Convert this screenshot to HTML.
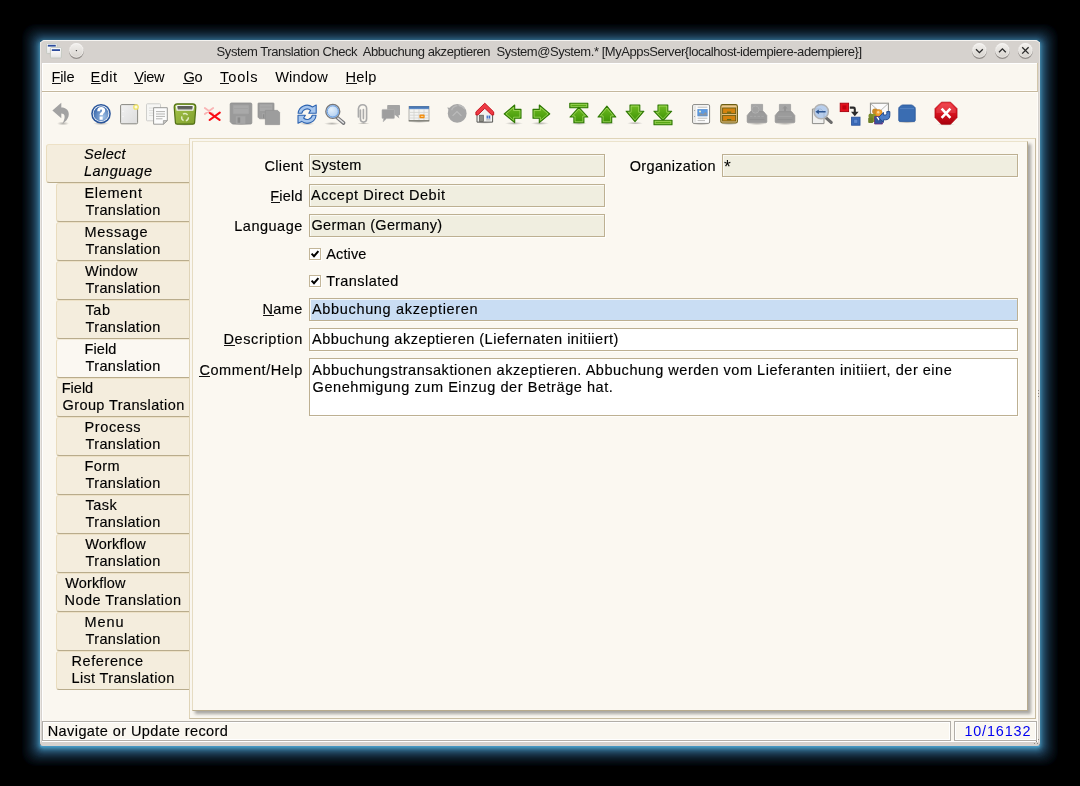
<!DOCTYPE html>
<html><head><meta charset="utf-8">
<style>
html,body{margin:0;padding:0;background:#000;}
body{width:1080px;height:786px;position:relative;overflow:hidden;font-family:"Liberation Sans",sans-serif;font-size:14px;color:#1b1b1b;}
div,svg{position:absolute;box-sizing:border-box;}
#glow{left:40px;top:42px;width:1000px;height:706px;border-radius:4px;box-shadow:0 0 0 1px rgb(58,122,155),0 0 0 2px rgb(50,106,138),0 0 0 3px rgb(42,91,121),0 0 0 4px rgb(36,79,106),0 0 0 5px rgb(32,69,94),0 0 0 6px rgb(28,60,83),0 0 0 7px rgb(24,52,73),0 0 0 8px rgb(21,45,64),0 0 0 9px rgb(18,39,55),0 0 0 10px rgb(15,33,47),0 0 0 11px rgb(12,28,40),0 0 0 12px rgb(10,24,34),0 0 0 13px rgb(8,20,28),0 0 0 14px rgb(8,15,23),0 0 0 15px rgb(7,11,19),0 0 0 16px rgb(3,10,14),0 0 0 17px rgb(0,8,11),0 0 0 18px rgb(0,2,8);}
#glowb{left:40px;top:745px;width:1000px;height:3px;border-radius:0 0 3px 3px;background:linear-gradient(#4496c2 0,#4496c2 66%,#408aaf 67%);}
#win{left:40px;top:40px;width:1000px;height:706px;background:#d6d2ce;border-radius:5px 5px 3px 3px;overflow:hidden;}
#hl{left:40px;top:40px;width:1000px;height:6px;border-radius:5px 5px 0 0;border-top:1px solid #f5f3f0;border-left:1px solid #ebe7e3;border-right:1px solid #e6e2de;}
#hll{left:40px;top:42px;width:1px;height:700px;background:#ebe7e3;}
#hlr{left:1039px;top:42px;width:1px;height:700px;background:#e4e0dc;}
#inner{left:42px;top:63px;width:996px;height:678px;background:#faf7f0;box-shadow:inset 1px 1px 0 #fff,inset -1px 0 0 #fffdf9;}
#wline{left:42px;top:741px;width:996px;height:1px;background:#fff;}
#menubar{left:42px;top:63px;width:996px;height:29px;border-bottom:1px solid #c5b89d;border-right:1px solid #d2c6aa;box-shadow:0 1px 0 #fffdf9,inset 0 -1px 0 #fffdf9;}
.t{white-space:pre;line-height:20px;height:20px;-webkit-text-stroke:0.15px currentColor;}
.u{height:1px;background:#111;}
.ic{overflow:visible;}
.tab{height:39px;background:#f4eddd;border-top:1px solid #ede1c6;border-left:1px solid #e9dcbe;border-bottom:1px solid #b9ac8c;border-radius:3px 0 0 3px;}
.tab.sel{background:#fbf8f2;border-top-color:#f2ead8;}
#oframe{left:189px;top:138px;width:847px;height:581px;border:1px solid #dfd4b8;border-right-color:#c6ba9e;border-bottom-color:#c6ba9e;}
#panel{left:192px;top:141px;width:836px;height:570px;background:#fbf8f1;border-top:1px solid #ebe3cc;border-left:1px solid #e6dcc2;border-right:1px solid #b7aa8c;border-bottom:1px solid #b7aa8c;box-shadow:3px 3px 3px rgba(45,45,45,.4);}
.ro{height:23px;background:#f0eee0;border:1px solid #bdb092;box-shadow:inset 1px 1px 0 #fbfaf4,1px 1px 0 #fffefb;}
.ed{background:#fff;border:1px solid #bdb092;box-shadow:1px 1px 0 #fffefb;}
.hi{background:#c9ddf3;box-shadow:inset 1px 1px 0 #f6f8f8,1px 1px 0 #fffefb;}
.cb{width:12px;height:12px;background:#fff;border:1px solid #c3b699;box-shadow:1px 1px 0 #fffefb;}
.sb{height:20px;top:721px;border:1px solid #b2aea8;background:#faf7f0;box-shadow:inset 0 0 0 1px #fff;}
</style></head><body>
<div id="glow"></div><div id="glowb"></div>
<div id="win"></div>
<div id="hl"></div><div id="hll"></div><div id="hlr"></div>
<div id="inner"></div><div id="wline"></div>
<div id="menubar"></div>
<div style="left:1038px;top:390px;width:1px;height:1px;background:#8e8880"></div><div style="left:1038px;top:393px;width:1px;height:1px;background:#8e8880"></div><div style="left:1038px;top:396px;width:1px;height:1px;background:#8e8880"></div>
<div style="left:1034px;top:743px;width:1px;height:1px;background:#8e8880"></div><div style="left:1036px;top:741px;width:1px;height:1px;background:#8e8880"></div><div style="left:1038px;top:739px;width:1px;height:1px;background:#8e8880"></div><div style="left:1037px;top:743px;width:1px;height:1px;background:#8e8880"></div>
<svg width="0" height="0" style="left:0;top:0"><defs>
<linearGradient id="gG" x1="0" y1="0" x2="0" y2="1"><stop offset="0" stop-color="#70bc22"/><stop offset="1" stop-color="#3c9205"/></linearGradient>
<linearGradient id="gGh" x1="0" y1="0" x2="1" y2="0"><stop offset="0" stop-color="#7cc528"/><stop offset="1" stop-color="#4e9a06"/></linearGradient>
<radialGradient id="gHelp" cx="0.65" cy="0.7" r="0.8"><stop offset="0" stop-color="#9fc0e6"/><stop offset="1" stop-color="#2f5fa6"/></radialGradient>
<linearGradient id="gDoc" x1="0" y1="0" x2="1" y2="1"><stop offset="0" stop-color="#f2f2f2"/><stop offset="1" stop-color="#dcdcdc"/></linearGradient>
<linearGradient id="gTrash" x1="0" y1="0" x2="1" y2="1"><stop offset="0" stop-color="#a6c54a"/><stop offset="1" stop-color="#7f9f2c"/></linearGradient>
<radialGradient id="gLens" cx="0.4" cy="0.35" r="0.7"><stop offset="0" stop-color="#e4f0fc"/><stop offset="1" stop-color="#a9c9ee"/></radialGradient>
<linearGradient id="gRed" x1="0" y1="0" x2="0" y2="1"><stop offset="0" stop-color="#f0303a"/><stop offset="0.5" stop-color="#d81420"/><stop offset="1" stop-color="#a8000c"/></linearGradient>
<linearGradient id="gBtn" x1="0" y1="0" x2="0" y2="1"><stop offset="0" stop-color="#f3f1ee"/><stop offset="0.55" stop-color="#e4e1dd"/><stop offset="1" stop-color="#d6d2cd"/></linearGradient>
<linearGradient id="gCal" x1="0" y1="0" x2="0" y2="1"><stop offset="0" stop-color="#3465a4"/><stop offset="1" stop-color="#6a96d0"/></linearGradient>
<radialGradient id="gSh" cx="0.5" cy="0.5" r="0.5"><stop offset="0" stop-color="#000" stop-opacity="0.28"/><stop offset="1" stop-color="#000" stop-opacity="0"/></radialGradient>
<linearGradient id="gWin" x1="0" y1="0" x2="0" y2="1"><stop offset="0" stop-color="#ffffff"/><stop offset="0.45" stop-color="#f6f6f6"/><stop offset="1" stop-color="#e4e4e4"/></linearGradient>
</defs></svg><svg style="left:45px;top:42px" width="20" height="18" viewBox="0 0 20 18"><rect x="1.6" y="1.6" width="10.4" height="10" rx="0.8" fill="url(#gWin)" stroke="#c2c6be" stroke-width="0.9"/><rect x="2.8" y="2.8" width="8" height="1.8" fill="#2c4c9c"/><rect x="5.4" y="5.6" width="11" height="10.4" rx="0.8" fill="url(#gWin)" stroke="#c2c6be" stroke-width="0.9"/><rect x="6.8" y="7.2" width="8.2" height="1.8" fill="#2c4c9c"/></svg><svg style="left:67px;top:41px" width="19" height="20" viewBox="0 0 19 20"><circle cx="9.4" cy="10.5" r="7.4" fill="#625e5a" fill-opacity="0.6"/><circle cx="9.4" cy="9.4" r="7.3" fill="url(#gBtn)"/><circle cx="9.4" cy="9.4" r="6.8" fill="none" stroke="#fff" stroke-opacity="0.45" stroke-width="0.8"/><circle cx="9.4" cy="9.6" r="0.7" fill="#333"/></svg><svg style="left:970px;top:41px" width="19" height="20" viewBox="0 0 19 20"><circle cx="9.4" cy="10.5" r="7.4" fill="#625e5a" fill-opacity="0.6"/><circle cx="9.4" cy="9.4" r="7.3" fill="url(#gBtn)"/><circle cx="9.4" cy="9.4" r="6.8" fill="none" stroke="#fff" stroke-opacity="0.45" stroke-width="0.8"/><path d="M6 8.2 L9.4 11.6 L12.8 8.2" fill="none" stroke="#2a2a2a" stroke-width="1.3"/></svg><svg style="left:993px;top:41px" width="19" height="20" viewBox="0 0 19 20"><circle cx="9.4" cy="10.5" r="7.4" fill="#625e5a" fill-opacity="0.6"/><circle cx="9.4" cy="9.4" r="7.3" fill="url(#gBtn)"/><circle cx="9.4" cy="9.4" r="6.8" fill="none" stroke="#fff" stroke-opacity="0.45" stroke-width="0.8"/><path d="M6 11.2 L9.4 7.8 L12.8 11.2" fill="none" stroke="#2a2a2a" stroke-width="1.3"/></svg><svg style="left:1016px;top:41px" width="19" height="20" viewBox="0 0 19 20"><circle cx="9.4" cy="10.5" r="7.4" fill="#625e5a" fill-opacity="0.6"/><circle cx="9.4" cy="9.4" r="7.3" fill="url(#gBtn)"/><circle cx="9.4" cy="9.4" r="6.8" fill="none" stroke="#fff" stroke-opacity="0.45" stroke-width="0.8"/><path d="M6.2 6.2 L12.6 12.6 M12.6 6.2 L6.2 12.6" fill="none" stroke="#2a2a2a" stroke-width="1.3"/></svg>
<svg class="ic" style="left:49.3px;top:102.4px" width="24" height="24" viewBox="0 0 24 24"><ellipse cx="14" cy="21.5" rx="6" ry="2" fill="url(#gSh)"/><path d="M12.3 0.8 L3.4 8.6 L12.3 16.2 L12.3 11.6 C15.6 11.6 17.2 14.4 13.6 21.6 C19.8 18 21.4 11.6 18.2 7.8 C16.6 6 14.4 5.4 12.3 5.4 Z" fill="#a2a2a2"/></svg>
<svg class="ic" style="left:89.3px;top:102.4px" width="24" height="24" viewBox="0 0 24 24"><ellipse cx="12" cy="21.6" rx="8" ry="1.6" fill="url(#gSh)"/><circle cx="12" cy="11.7" r="9.8" fill="#28549a"/><circle cx="12" cy="11.7" r="8.3" fill="#fff"/><circle cx="12" cy="11.7" r="7.5" fill="url(#gHelp)"/><path d="M8.2 9.3 C8.2 6.2 9.9 5 12.2 5 C14.7 5 16.2 6.4 16.2 8.4 C16.2 10.8 13.7 11.2 13.7 13.3 L10.6 13.3 C10.6 10.6 13 10.2 13 8.7 C13 8 12.6 7.6 12.1 7.6 C11.4 7.6 11.1 8.2 11.1 9.3 Z M10.6 14.6 h3.1 v3.1 h-3.1 Z" fill="#fff"/></svg>
<svg class="ic" style="left:117.3px;top:102.4px" width="24" height="24" viewBox="0 0 24 24"><rect x="3.6" y="2.6" width="17" height="19.2" rx="1.2" fill="url(#gDoc)" stroke="#888882" stroke-width="1"/><circle cx="6" cy="9.3" r="0.6" fill="#fff"/><circle cx="6" cy="14.6" r="0.6" fill="#fff"/><circle cx="19" cy="5" r="2.2" fill="#fdfbe0" stroke="#efe264" stroke-width="1.3"/></svg>
<svg class="ic" style="left:145.3px;top:102.4px" width="24" height="24" viewBox="0 0 24 24"><rect x="1.5" y="1.8" width="14" height="17" rx="0.8" fill="#f6f6f4" stroke="#cfcfcc"/><path d="M4 6h9M4 8.5h9M4 11h9M4 13.5h6" stroke="#dcdcda" stroke-width="0.9"/><path d="M8.6 5.7 H22.3 V18.6 L18.4 22.2 H8.6 Z" fill="#fcfcfc" stroke="#9a9a98" stroke-linejoin="round"/><path d="M22.3 18.6 H18.4 V22.2 Z" fill="#c8c8c6" stroke="#9a9a98" stroke-width="0.8" stroke-linejoin="round"/><path d="M11 9.6h9M11 12h9M11 14.4h9M11 16.8h6.5" stroke="#b4b4b2" stroke-width="1"/></svg>
<svg class="ic" style="left:173.3px;top:102.4px" width="24" height="24" viewBox="0 0 24 24"><ellipse cx="12" cy="22.4" rx="10.5" ry="1.5" fill="url(#gSh)"/><path d="M1.2 5.2 Q1.2 1.9 4.4 1.9 H19.6 Q22.8 1.9 22.8 5.2 L21.6 20.6 Q21.5 22.2 19.9 22.2 H4.1 Q2.5 22.2 2.4 20.6 Z" fill="url(#gTrash)" stroke="#4f6e12" stroke-width="1.2"/><path d="M2.8 4.4 Q2.8 2.9 4.4 2.9 H19.6 Q21.2 2.9 21.2 4.4 L20.4 8.7 H3.6 Z" fill="#f3f5f1"/><path d="M4.2 4.7 Q4.2 3.9 5 3.9 H19 Q19.8 3.9 19.8 4.7 L19.2 7.5 H4.8 Z" fill="#666862"/><path d="M5 4.4 H19 L18.8 5.6 H5.2Z" fill="#555751"/><path d="M10 12.2 a3.6 3.6 0 0 1 4.6 0.8 M15.4 15.2 a3.6 3.6 0 0 1 -2.6 3.6 M10.6 18.6 a3.6 3.6 0 0 1 -1.8 -4.2" fill="none" stroke="#eaf3cf" stroke-width="1.4" stroke-opacity="0.9"/></svg>
<svg class="ic" style="left:201.3px;top:102.4px" width="24" height="24" viewBox="0 0 24 24"><path d="M3.8 6 L12.2 12 M12.2 6 L3.8 12" stroke="#f9b4b4" stroke-width="1.8" stroke-linecap="round"/><path d="M8.8 11 L18.6 17.8 M18.8 10.6 L8.6 18" stroke="#fc0c14" stroke-width="2.1" stroke-linecap="round"/></svg>
<svg class="ic" style="left:229.3px;top:102.4px" width="24" height="24" viewBox="0 0 24 24"><ellipse cx="12" cy="22.2" rx="9" ry="1.2" fill="url(#gSh)"/><path d="M1.2 2.2 Q1.2 1 2.4 1 H21.6 Q22.8 1 22.8 2.2 V20.8 Q22.8 22 21.6 22 H3.4 L1.2 19.8 Z" fill="#9a9a9a" stroke="#8e8e8e" stroke-width="0.8"/><rect x="4" y="3" width="16" height="9" rx="0.6" fill="#a9a9a9" stroke="#9f9f9f" stroke-width="0.6"/><path d="M5 6.5h14" stroke="#a2a2a2"/><rect x="6.8" y="14.2" width="9.6" height="7.6" fill="#a6a6a6"/><rect x="8.6" y="15.4" width="2.6" height="5.4" fill="#8a8a8a"/></svg>
<svg class="ic" style="left:257.3px;top:102.4px" width="24" height="24" viewBox="0 0 24 24"><path d="M1 1.6 Q1 1 1.6 1 H16.4 Q17 1 17 1.6 V16.8 H2.6 L1 15.2 Z" fill="#9c9c9c" stroke="#909090" stroke-width="0.7"/><rect x="2.8" y="2.4" width="12.4" height="6.6" fill="#a9a9a9"/><path d="M3.4 5h11" stroke="#a0a0a0"/><rect x="5" y="11.4" width="5" height="5" fill="#a8a8a8"/><rect x="5.8" y="12.2" width="1.6" height="4" fill="#8c8c8c"/><path d="M8.4 8.4 H20.6 L22.6 10.4 V22.6 H8.4 Z" fill="#9d9d9d" stroke="#939393" stroke-width="0.8"/></svg>
<svg class="ic" style="left:295.3px;top:102.4px" width="24" height="24" viewBox="0 0 24 24"><ellipse cx="12" cy="21.8" rx="8" ry="1.3" fill="url(#gSh)"/><path d="M3.1 11.2 A9 9 0 0 1 17.5 5 L21.2 3.1 L21.2 11.2 L13.8 11.2 L15.6 8.4 A5.2 5.2 0 0 0 6.9 11.2 Z" fill="#a6c6ee" stroke="#2d63b0" stroke-width="1.1" stroke-linejoin="round"/><path d="M21.1 13.2 A9 9 0 0 1 6.7 19.4 L3 21.3 L3 13.2 L10.4 13.2 L8.6 16 A5.2 5.2 0 0 0 17.3 13.2 Z" fill="#a6c6ee" stroke="#2d63b0" stroke-width="1.1" stroke-linejoin="round"/></svg>
<svg class="ic" style="left:323.3px;top:102.4px" width="24" height="24" viewBox="0 0 24 24"><ellipse cx="9" cy="21.6" rx="8" ry="1.6" fill="url(#gSh)"/><path d="M14.2 15.6 L20.6 21" stroke="#76767a" stroke-width="3.6" stroke-linecap="round"/><path d="M14.8 16.1 L20.4 20.8" stroke="#e6e6e6" stroke-width="1.4" stroke-linecap="round"/><circle cx="9.8" cy="9.4" r="7" fill="url(#gLens)" stroke="#777779" stroke-width="1.3"/><circle cx="9.8" cy="9.4" r="5.6" fill="none" stroke="#6aa0e6" stroke-width="1"/></svg>
<svg class="ic" style="left:351.3px;top:102.4px" width="24" height="24" viewBox="0 0 24 24"><ellipse cx="12.5" cy="21.4" rx="6" ry="1" fill="url(#gSh)"/><path d="M9.4 8 V16.8 C9.4 21.2 15.6 21.2 15.6 16.8 V6.2 C15.6 1.6 8 1.6 7.4 6.8 V15 M12.4 7.6 V16.6" fill="none" stroke="#aaaaaa" stroke-width="1.6" stroke-linecap="round"/></svg>
<svg class="ic" style="left:379.3px;top:102.4px" width="24" height="24" viewBox="0 0 24 24"><path d="M9 3 H20.2 Q21 3 21 3.8 V12.4 Q21 13.2 20.2 13.2 H19.4 L20.4 16.4 L16.4 13.2 H9 Q8.2 13.2 8.2 12.4 V3.8 Q8.2 3 9 3 Z" fill="#a4a4a4"/><path d="M3.8 7.4 H14.6 Q15.4 7.4 15.4 8.2 V15.8 Q15.4 16.6 14.6 16.6 H7.6 L4.2 19.8 L4.6 16.6 H3.8 Q3 16.6 3 15.8 V8.2 Q3 7.4 3.8 7.4 Z" fill="#9e9e9e" stroke="#b4b4b4" stroke-width="0.6"/></svg>
<svg class="ic" style="left:407.3px;top:102.4px" width="24" height="24" viewBox="0 0 24 24"><ellipse cx="12" cy="19.6" rx="11" ry="1.4" fill="url(#gSh)"/><rect x="2" y="4.4" width="20" height="14.4" fill="#f4f4f2" stroke="#a0a09c" stroke-width="0.8"/><rect x="2" y="4.2" width="20" height="3" fill="url(#gCal)"/><path d="M2 10.4H22M2 13.2H22M2 16H22M7 7.2V18.8M12 7.2V18.8M17 7.2V18.8" stroke="#d2d2ce" stroke-width="0.8"/><rect x="12.4" y="12.6" width="5.2" height="3.6" rx="1" fill="#f28c0c"/><rect x="13.8" y="13.9" width="2.6" height="1" fill="#fbd49a"/><path d="M1.8 18.8H22.2" stroke="#77776f" stroke-width="1.2"/></svg>
<svg class="ic" style="left:445.3px;top:102.4px" width="24" height="24" viewBox="0 0 24 24"><circle cx="12.2" cy="11.4" r="9.4" fill="#a6a6a6"/><path d="M2.2 5.6 L8.6 6.2 L5.2 10.6 Z" fill="#a6a6a6"/><path d="M6.6 8.2 C7.6 5.4 9.6 4 12.4 3.6" fill="none" stroke="#b9b9b9" stroke-width="1.3"/><path d="M13.6 3.4 C16.4 3.8 18.6 5.2 19.8 7.2" fill="none" stroke="#bdbdbd" stroke-width="1.2"/><path d="M7.6 13.8 L12 9.6 L16.4 13.8" fill="none" stroke="#bcbcbc" stroke-width="1.1"/></svg>
<svg class="ic" style="left:473.3px;top:102.4px" width="24" height="24" viewBox="0 0 24 24"><ellipse cx="11.8" cy="20.6" rx="9" ry="1.2" fill="url(#gSh)"/><path d="M4 11 H19.6 V20.1 H4 Z" fill="#f5f5f3" stroke="#585856" stroke-width="1"/><path d="M11.8 5.6 L4.6 12.9 H19 Z" fill="#f1f1ef"/><path d="M11.8 1.2 L2.9 9.9 V12.9 L4.9 12.9 L11.8 6.3 L18.7 12.9 L20.7 12.9 V9.9 Z" fill="#ee3a44" stroke="#c00a14" stroke-width="0.9" stroke-linejoin="round"/><rect x="6.3" y="13.2" width="4.1" height="6.4" fill="#8c8c84" stroke="#5c5c56" stroke-width="0.7"/><rect x="13.2" y="13.2" width="4.3" height="3.7" fill="#3c6cc4" stroke="#e4eaf4" stroke-width="0.6"/><path d="M15.35 13.2V16.9" stroke="#e4eaf4" stroke-width="0.7"/><path d="M13.2 17.9H17.5" stroke="#9a9a96" stroke-width="0.8"/></svg>
<svg class="ic" style="left:501.3px;top:102.4px" width="24" height="24" viewBox="0 0 24 24"><ellipse cx="13" cy="21.4" rx="9" ry="1.6" fill="url(#gSh)"/><path d="M3.2 11.9 L13.7 3 V7.4 H20 V16.3 H13.7 V20.7 Z" fill="url(#gG)" stroke="#2f7804" stroke-width="1.1" stroke-linejoin="round"/><path d="M5 11.9 L12.6 5.4 V8.5 H18.9 V15.2 H12.6 V18.3 Z" fill="none" stroke="#b9e676" stroke-opacity="0.6" stroke-width="1"/></svg>
<svg class="ic" style="left:529.3px;top:102.4px" width="24" height="24" viewBox="0 0 24 24"><ellipse cx="11" cy="21.4" rx="9" ry="1.6" fill="url(#gSh)"/><path d="M20.8 11.9 L10.3 3 V7.4 H4 V16.3 H10.3 V20.7 Z" fill="url(#gG)" stroke="#2f7804" stroke-width="1.1" stroke-linejoin="round"/><path d="M19 11.9 L11.4 5.4 V8.5 H5.1 V15.2 H11.4 V18.3 Z" fill="none" stroke="#b9e676" stroke-opacity="0.6" stroke-width="1"/></svg>
<svg class="ic" style="left:567.3px;top:102.4px" width="24" height="24" viewBox="0 0 24 24"><ellipse cx="12" cy="21.6" rx="8" ry="1.4" fill="url(#gSh)"/><rect x="2.8" y="1.2" width="18" height="4.6" fill="url(#gG)" stroke="#2f7804" stroke-width="1.1" stroke-linejoin="round"/><rect x="4" y="2.4" width="15.6" height="2.2" fill="none" stroke="#b9e676" stroke-opacity="0.6" stroke-width="1"/><path d="M11.9 5.4 L20.8 15 H16.9 V20.8 H6.9 V15 H3 Z" fill="url(#gG)" stroke="#2f7804" stroke-width="1.1" stroke-linejoin="round"/><path d="M11.9 7.2 L18.4 14 H15.8 V19.7 H8 V14 H5.4 Z" fill="none" stroke="#b9e676" stroke-opacity="0.6" stroke-width="1"/></svg>
<svg class="ic" style="left:595.3px;top:102.4px" width="24" height="24" viewBox="0 0 24 24"><ellipse cx="12" cy="21.6" rx="8" ry="1.4" fill="url(#gSh)"/><path d="M11.9 4.2 L20.8 15 H16.7 V20.8 H7 V15 H3 Z" fill="url(#gG)" stroke="#2f7804" stroke-width="1.1" stroke-linejoin="round"/><path d="M11.9 6 L18.4 13.9 H15.6 V19.7 H8.1 V13.9 H5.4 Z" fill="none" stroke="#b9e676" stroke-opacity="0.6" stroke-width="1"/></svg>
<svg class="ic" style="left:623.3px;top:102.4px" width="24" height="24" viewBox="0 0 24 24"><ellipse cx="12" cy="21.2" rx="8" ry="1.4" fill="url(#gSh)"/><path d="M12 19.7 L3.1 9.2 H7 V3 H16.8 V9.2 H20.9 Z" fill="url(#gG)" stroke="#2f7804" stroke-width="1.1" stroke-linejoin="round"/><path d="M12 17.9 L5.5 10.3 H8.1 V4.1 H15.7 V10.3 H18.5 Z" fill="none" stroke="#b9e676" stroke-opacity="0.6" stroke-width="1"/></svg>
<svg class="ic" style="left:651.3px;top:102.4px" width="24" height="24" viewBox="0 0 24 24"><path d="M12 18.6 L2.9 9.2 H7 V3 H16.8 V9.2 H20.7 Z" fill="url(#gG)" stroke="#2f7804" stroke-width="1.1" stroke-linejoin="round"/><path d="M12 16.8 L5.5 10.3 H8.1 V4.1 H15.7 V10.3 H18.3 Z" fill="none" stroke="#b9e676" stroke-opacity="0.6" stroke-width="1"/><rect x="3" y="18.2" width="18" height="4.6" fill="url(#gG)" stroke="#2f7804" stroke-width="1.1" stroke-linejoin="round"/><rect x="4.2" y="19.4" width="15.6" height="2.2" fill="none" stroke="#b9e676" stroke-opacity="0.6" stroke-width="1"/></svg>
<svg class="ic" style="left:689.3px;top:102.4px" width="24" height="24" viewBox="0 0 24 24"><ellipse cx="12" cy="22" rx="9" ry="1.2" fill="url(#gSh)"/><rect x="3.6" y="2.6" width="17" height="18.8" rx="1.4" fill="#fdfdfd" stroke="#868682" stroke-width="1"/><rect x="4.4" y="3.4" width="2.8" height="17.2" fill="#e9e9e7"/><circle cx="5.6" cy="8.4" r="0.5" fill="#888"/><circle cx="5.6" cy="14.6" r="0.5" fill="#888"/><path d="M8.6 5.2H18.4M8.6 16.2H18.4M8.6 18.6H16" stroke="#b4b4b2" stroke-width="0.9"/><rect x="8.8" y="7.4" width="9.4" height="6.6" fill="#5c9ae2" stroke="#4a86cc" stroke-width="0.6"/><path d="M9.2 13.6 L12 11 L14 12.4 L16.4 10 L17.8 11.2 V13.6 Z" fill="#8a94a0"/><circle cx="11" cy="9.4" r="1" fill="#f4f0c0"/></svg>
<svg class="ic" style="left:717.3px;top:102.4px" width="24" height="24" viewBox="0 0 24 24"><ellipse cx="12" cy="21.8" rx="9" ry="1.3" fill="url(#gSh)"/><rect x="3.8" y="2.6" width="16.6" height="18.4" rx="1.8" fill="#edc98c" stroke="#6b5d12" stroke-width="1.1"/><rect x="5.6" y="6" width="13" height="5.6" fill="#d4830e" stroke="#6b5d12" stroke-width="0.9"/><rect x="5.6" y="13.4" width="13" height="5.6" fill="#d4830e" stroke="#6b5d12" stroke-width="0.9"/><rect x="10" y="9.6" width="4.2" height="1.2" fill="#5c6a1a"/><rect x="10" y="17" width="4.2" height="1.2" fill="#5c6a1a"/></svg>
<svg class="ic" style="left:745.3px;top:102.4px" width="24" height="24" viewBox="0 0 24 24"><ellipse cx="12" cy="21.8" rx="9" ry="1.2" fill="url(#gSh)"/><path d="M6.4 2.4 H17.6 V10 H6.4 Z" fill="#a6a6a6" stroke="#9a9a9a" stroke-width="0.7"/><path d="M5.4 9.6 H18.6 L21.8 13.4 V19.6 Q21.8 20.8 20.6 20.8 H3.4 Q2.2 20.8 2.2 19.6 V13.4 Z" fill="#9b9b9b" stroke="#919191" stroke-width="0.7"/><circle cx="10.4" cy="7.6" r="3.6" fill="#a2a2a2" stroke="#b0b0b0" stroke-width="1"/><path d="M5 14.4 H19" stroke="#a8a8a8" stroke-width="1" stroke-dasharray="2.4 1.4"/><path d="M4.6 17.6H19.4" stroke="#929292" stroke-width="1"/></svg>
<svg class="ic" style="left:773.3px;top:102.4px" width="24" height="24" viewBox="0 0 24 24"><ellipse cx="12" cy="21.8" rx="9" ry="1.2" fill="url(#gSh)"/><path d="M6.4 2.4 H17.6 V10 H6.4 Z" fill="#a6a6a6" stroke="#9a9a9a" stroke-width="0.7"/><path d="M12 3.8 L14.6 6.6 H13 V9 H11 V6.6 H9.4 Z" fill="#949494"/><path d="M5.4 9.6 H18.6 L21.8 13.4 V19.6 Q21.8 20.8 20.6 20.8 H3.4 Q2.2 20.8 2.2 19.6 V13.4 Z" fill="#9b9b9b" stroke="#919191" stroke-width="0.7"/><path d="M5 14.4 H19" stroke="#a6a6a6" stroke-width="1"/><path d="M4.6 17.6H19.4" stroke="#929292" stroke-width="1"/></svg>
<svg class="ic" style="left:810.3px;top:102.4px" width="24" height="24" viewBox="0 0 24 24"><path d="M2.4 7 H11 L14 10 V21.6 H2.4 Z" fill="#f0f0ee" stroke="#8e8e8a" stroke-width="1"/><path d="M15.8 15.6 L21.2 20.4" stroke="#6c6c6c" stroke-width="3.2" stroke-linecap="round"/><circle cx="11.2" cy="9.6" r="7.2" fill="#a9c5ea" fill-opacity="0.82" stroke="#b2b2b2" stroke-width="1.5"/><path d="M5.4 9.8 L8.8 7.4 V9.1 H15.6 V10.5 H8.8 V12.2 Z" fill="#2c5590"/></svg>
<svg class="ic" style="left:838.3px;top:102.4px" width="24" height="24" viewBox="0 0 24 24"><rect x="2.2" y="1.2" width="8.4" height="8.4" fill="#e3121e" stroke="#a8000e" stroke-width="0.9"/><rect x="4.4" y="3.4" width="4" height="4" fill="#c2000e"/><rect x="13.6" y="15.2" width="8.4" height="8" fill="#3d6ebc" stroke="#2a529a" stroke-width="0.9"/><rect x="15.8" y="17.2" width="4" height="4" fill="#5f8ad0" stroke="#2f5aa4" stroke-width="0.6"/><path d="M11.8 5.6 H15.4 Q16.8 5.6 16.8 7 V10.4" fill="none" stroke="#2a2a2a" stroke-width="2.1"/><path d="M13 9.8 H20.6 L16.8 14.2 Z" fill="#2a2a2a"/></svg>
<svg class="ic" style="left:867.3px;top:102.4px" width="24" height="24" viewBox="0 0 24 24"><rect x="3.4" y="1.2" width="18" height="14.6" fill="#fbfbfb" stroke="#8a8a86" stroke-width="1"/><path d="M3.6 1.6 L12.4 9.6 L21.2 1.6" fill="none" stroke="#b0b0ac" stroke-width="0.9"/><circle cx="8" cy="9.4" r="2.8" fill="#c88a2a"/><path d="M4.2 12 H10.6 V20 H4.2 Z" fill="#8a9a2a"/><circle cx="3.8" cy="14" r="2.4" fill="#7a8a2a"/><rect x="1.2" y="15.4" width="5" height="5.6" rx="1" fill="#6e8028"/><circle cx="11.8" cy="11" r="3.4" fill="#f0a030" stroke="#d08010" stroke-width="0.6"/><circle cx="11.2" cy="10.2" r="1.2" fill="#fbd89a"/><path d="M7.6 14.6 H15.4 V22 H7.6 Z" fill="#34569c" stroke="#6a2a7a" stroke-width="0.8"/><path d="M9.4 15 L11.6 18.4 L13.6 15 Z" fill="#fff"/><path d="M11.6 15.4 L16.4 10.4 V13 H18.4 Q19.8 13 19.8 11.4 V9.6 H22.8 V13.4 Q22.8 17.8 18.4 17.8 H16.4 V20.4 Z" fill="#4a7cc6" stroke="#234a8c" stroke-width="1" stroke-linejoin="round"/></svg>
<svg class="ic" style="left:895.3px;top:102.4px" width="24" height="24" viewBox="0 0 24 24"><ellipse cx="12" cy="20.2" rx="9.5" ry="1.4" fill="url(#gSh)"/><path d="M3.8 6.4 Q3.8 5.4 4.6 4.8 L6.4 3.4 Q7 3 7.8 3 H16.2 Q17 3 17.6 3.4 L19.4 4.8 Q20.2 5.4 20.2 6.4 V18.4 Q20.2 19.4 19.2 19.4 H4.8 Q3.8 19.4 3.8 18.4 Z" fill="#3a6db2" stroke="#2d5a9c" stroke-width="0.9"/><path d="M5 6.6 H19" stroke="#5a88c6" stroke-width="0.8"/></svg>
<svg class="ic" style="left:934.3px;top:102.4px" width="24" height="24" viewBox="0 0 24 24"><ellipse cx="12" cy="22.4" rx="9" ry="1.4" fill="url(#gSh)"/><path d="M7.4 0.2 H16.6 L23 6.6 V15.6 L16.6 22.2 H7.4 L1 15.6 V6.6 Z" fill="url(#gRed)" stroke="#b00812" stroke-width="0.8" stroke-linejoin="round"/><path d="M8 1.6 H16 L21.6 7.2 V11 H2.4 V7.2 Z" fill="#fff" fill-opacity="0.12"/><path d="M7.6 6.6 L16.4 15.8 M16.4 6.6 L7.6 15.8" stroke="#fff" stroke-width="2.6" stroke-linecap="butt"/></svg>

<div class="tab" style="left:46px;top:144px;width:143px"></div>
<div class="tab" style="left:56px;top:183px;width:133px"></div>
<div class="tab" style="left:56px;top:222px;width:133px"></div>
<div class="tab" style="left:56px;top:261px;width:133px"></div>
<div class="tab" style="left:56px;top:300px;width:133px"></div>
<div class="tab sel" style="left:56px;top:339px;width:133px"></div>
<div class="tab" style="left:56px;top:378px;width:133px"></div>
<div class="tab" style="left:56px;top:417px;width:133px"></div>
<div class="tab" style="left:56px;top:456px;width:133px"></div>
<div class="tab" style="left:56px;top:495px;width:133px"></div>
<div class="tab" style="left:56px;top:534px;width:133px"></div>
<div class="tab" style="left:56px;top:573px;width:133px"></div>
<div class="tab" style="left:56px;top:612px;width:133px"></div>
<div class="tab" style="left:56px;top:651px;width:133px"></div>

<div id="oframe"></div>
<div id="panel"></div>
<div class="ro" style="left:309px;top:154px;width:296px"></div>
<div class="ro" style="left:309px;top:184px;width:296px"></div>
<div class="ro" style="left:309px;top:214px;width:296px"></div>
<div class="ro" style="left:722px;top:154px;width:296px"></div>
<div class="cb" style="left:309px;top:248px"></div>
<div class="cb" style="left:309px;top:275px"></div>
<svg style="left:309px;top:248px" width="12" height="12" viewBox="0 0 12 12"><path d="M2.6 5.6 L5 8.2 L9.4 3.2" fill="none" stroke="#000" stroke-width="2"/></svg>
<svg style="left:309px;top:275px" width="12" height="12" viewBox="0 0 12 12"><path d="M2.6 5.6 L5 8.2 L9.4 3.2" fill="none" stroke="#000" stroke-width="2"/></svg>
<div class="ed hi" style="left:309px;top:298px;width:709px;height:23px"></div>
<div class="ed" style="left:309px;top:328px;width:709px;height:23px"></div>
<div class="ed" style="left:309px;top:358px;width:709px;height:58px"></div>
<div class="sb" style="left:42px;width:909px"></div>
<div class="sb" style="left:954px;width:83px"></div>
<div id="txt" style="left:0;top:0;width:1080px;height:786px;will-change:transform"><div class="t" style="left:216.60px;top:41.50px;font-size:13px;letter-spacing:-0.437px;color:#222;-webkit-text-stroke:0;">System Translation Check  Abbuchung akzeptieren  System@System.* [MyAppsServer{localhost-idempiere-adempiere}]</div>
<div class="t" style="left:51.50px;top:66.80px;font-size:14.6px;letter-spacing:-0.166px;color:#000;-webkit-text-stroke:0;">File</div><div class="u" style="left:52.0px;top:83px;width:8.8px"></div>
<div class="t" style="left:90.50px;top:66.80px;font-size:14.6px;letter-spacing:0.436px;color:#000;-webkit-text-stroke:0;">Edit</div><div class="u" style="left:91.0px;top:83px;width:10.0px"></div>
<div class="t" style="left:134.30px;top:66.80px;font-size:14.6px;letter-spacing:-0.376px;color:#000;-webkit-text-stroke:0;">View</div><div class="u" style="left:133.8px;top:83px;width:9.5px"></div>
<div class="t" style="left:183.50px;top:66.80px;font-size:14.6px;letter-spacing:-0.451px;color:#000;-webkit-text-stroke:0;">Go</div><div class="u" style="left:183.0px;top:83px;width:11.1px"></div>
<div class="t" style="left:220.00px;top:66.80px;font-size:14.6px;letter-spacing:0.857px;color:#000;-webkit-text-stroke:0;">Tools</div><div class="u" style="left:219.5px;top:83px;width:9.3px"></div>
<div class="t" style="left:275.20px;top:66.80px;font-size:14.6px;letter-spacing:0.147px;color:#000;-webkit-text-stroke:0;">Window</div>
<div class="t" style="left:345.50px;top:66.80px;font-size:14.6px;letter-spacing:0.301px;color:#000;-webkit-text-stroke:0;">Help</div><div class="u" style="left:346.0px;top:83px;width:10.7px"></div>
<div class="t" style="left:84.00px;top:143.75px;font-size:14.5px;letter-spacing:0.246px;color:#000;font-style:italic;">Select</div>
<div class="t" style="left:84.00px;top:160.75px;font-size:14.5px;letter-spacing:0.493px;color:#000;font-style:italic;">Language</div>
<div class="t" style="left:84.40px;top:182.75px;font-size:14.5px;letter-spacing:0.723px;color:#000;">Element</div>
<div class="t" style="left:85.60px;top:199.75px;font-size:14.5px;letter-spacing:0.352px;color:#000;">Translation</div>
<div class="t" style="left:84.60px;top:221.75px;font-size:14.5px;letter-spacing:0.688px;color:#000;">Message</div>
<div class="t" style="left:85.60px;top:238.75px;font-size:14.5px;letter-spacing:0.352px;color:#000;">Translation</div>
<div class="t" style="left:85.00px;top:260.75px;font-size:14.5px;letter-spacing:0.200px;color:#000;">Window</div>
<div class="t" style="left:85.60px;top:277.75px;font-size:14.5px;letter-spacing:0.352px;color:#000;">Translation</div>
<div class="t" style="left:85.40px;top:299.75px;font-size:14.5px;letter-spacing:0.643px;color:#000;">Tab</div>
<div class="t" style="left:85.60px;top:316.75px;font-size:14.5px;letter-spacing:0.352px;color:#000;">Translation</div>
<div class="t" style="left:84.60px;top:338.75px;font-size:14.5px;letter-spacing:0.071px;color:#000;">Field</div>
<div class="t" style="left:85.60px;top:355.75px;font-size:14.5px;letter-spacing:0.352px;color:#000;">Translation</div>
<div class="t" style="left:61.75px;top:377.75px;font-size:14.5px;letter-spacing:-0.004px;color:#000;">Field</div>
<div class="t" style="left:62.50px;top:394.75px;font-size:14.5px;letter-spacing:0.403px;color:#000;">Group Translation</div>
<div class="t" style="left:84.60px;top:416.75px;font-size:14.5px;letter-spacing:0.587px;color:#000;">Process</div>
<div class="t" style="left:85.60px;top:433.75px;font-size:14.5px;letter-spacing:0.352px;color:#000;">Translation</div>
<div class="t" style="left:84.60px;top:455.75px;font-size:14.5px;letter-spacing:0.350px;color:#000;">Form</div>
<div class="t" style="left:85.60px;top:472.75px;font-size:14.5px;letter-spacing:0.352px;color:#000;">Translation</div>
<div class="t" style="left:85.40px;top:494.75px;font-size:14.5px;letter-spacing:0.512px;color:#000;">Task</div>
<div class="t" style="left:85.60px;top:511.75px;font-size:14.5px;letter-spacing:0.352px;color:#000;">Translation</div>
<div class="t" style="left:85.25px;top:533.75px;font-size:14.5px;letter-spacing:0.160px;color:#000;">Workflow</div>
<div class="t" style="left:85.60px;top:550.75px;font-size:14.5px;letter-spacing:0.352px;color:#000;">Translation</div>
<div class="t" style="left:65.25px;top:572.75px;font-size:14.5px;letter-spacing:0.124px;color:#000;">Workflow</div>
<div class="t" style="left:64.60px;top:589.75px;font-size:14.5px;letter-spacing:0.455px;color:#000;">Node Translation</div>
<div class="t" style="left:84.60px;top:611.75px;font-size:14.5px;letter-spacing:0.898px;color:#000;">Menu</div>
<div class="t" style="left:85.60px;top:628.75px;font-size:14.5px;letter-spacing:0.352px;color:#000;">Translation</div>
<div class="t" style="left:71.50px;top:650.75px;font-size:14.5px;letter-spacing:0.596px;color:#000;">Reference</div>
<div class="t" style="left:71.50px;top:667.75px;font-size:14.5px;letter-spacing:0.345px;color:#000;">List Translation</div>
<div class="t" style="left:264.60px;top:156.10px;font-size:14.5px;letter-spacing:0.291px;color:#000;">Client</div>
<div class="t" style="left:270.25px;top:185.75px;font-size:14.5px;letter-spacing:0.221px;color:#000;">Field</div><div class="u" style="left:270.8px;top:202px;width:9.0px"></div>
<div class="t" style="left:234.25px;top:215.75px;font-size:14.5px;letter-spacing:0.507px;color:#000;">Language</div>
<div class="t" style="left:262.50px;top:298.60px;font-size:14.5px;letter-spacing:0.379px;color:#000;">Name</div><div class="u" style="left:263.0px;top:315px;width:10.7px"></div>
<div class="t" style="left:223.40px;top:328.80px;font-size:14.5px;letter-spacing:0.639px;color:#000;">Description</div><div class="u" style="left:223.9px;top:345px;width:10.8px"></div>
<div class="t" style="left:199.40px;top:359.50px;font-size:14.5px;letter-spacing:0.565px;color:#000;">Comment/Help</div><div class="u" style="left:198.9px;top:376px;width:10.8px"></div>
<div class="t" style="left:629.75px;top:156.10px;font-size:14.5px;letter-spacing:0.318px;color:#000;">Organization</div>
<div class="t" style="left:326.25px;top:243.75px;font-size:14.5px;letter-spacing:0.116px;color:#000;">Active</div>
<div class="t" style="left:326.25px;top:270.75px;font-size:14.5px;letter-spacing:0.455px;color:#000;">Translated</div>
<div class="t" style="left:311.50px;top:155.00px;font-size:14.5px;letter-spacing:0.297px;color:#000;">System</div>
<div class="t" style="left:311.00px;top:184.80px;font-size:14.5px;letter-spacing:0.552px;color:#000;">Accept Direct Debit</div>
<div class="t" style="left:311.50px;top:215.00px;font-size:14.5px;letter-spacing:0.326px;color:#000;">German (Germany)</div>
<div class="t" style="left:724.00px;top:157.00px;font-size:17.5px;letter-spacing:0.000px;color:#000;-webkit-text-stroke:0;">*</div>
<div class="t" style="left:312.00px;top:298.75px;font-size:14.5px;letter-spacing:0.660px;color:#000;">Abbuchung akzeptieren</div>
<div class="t" style="left:312.00px;top:328.75px;font-size:14.5px;letter-spacing:0.495px;color:#000;">Abbuchung akzeptieren (Liefernaten initiiert)</div>
<div class="t" style="left:312.30px;top:359.50px;font-size:14.5px;letter-spacing:0.525px;color:#000;">Abbuchungstransaktionen akzeptieren. Abbuchung werden vom Lieferanten initiiert, der eine</div>
<div class="t" style="left:312.60px;top:376.60px;font-size:14.5px;letter-spacing:0.562px;color:#000;">Genehmigung zum Einzug der Beträge hat.</div>
<div class="t" style="left:47.70px;top:720.80px;font-size:14.5px;letter-spacing:0.421px;color:#000;">Navigate or Update record</div>
<div class="t" style="left:964.40px;top:720.80px;font-size:14.4px;letter-spacing:0.854px;color:#0000f2;-webkit-text-stroke:0;">10/16132</div></div>
</body></html>
